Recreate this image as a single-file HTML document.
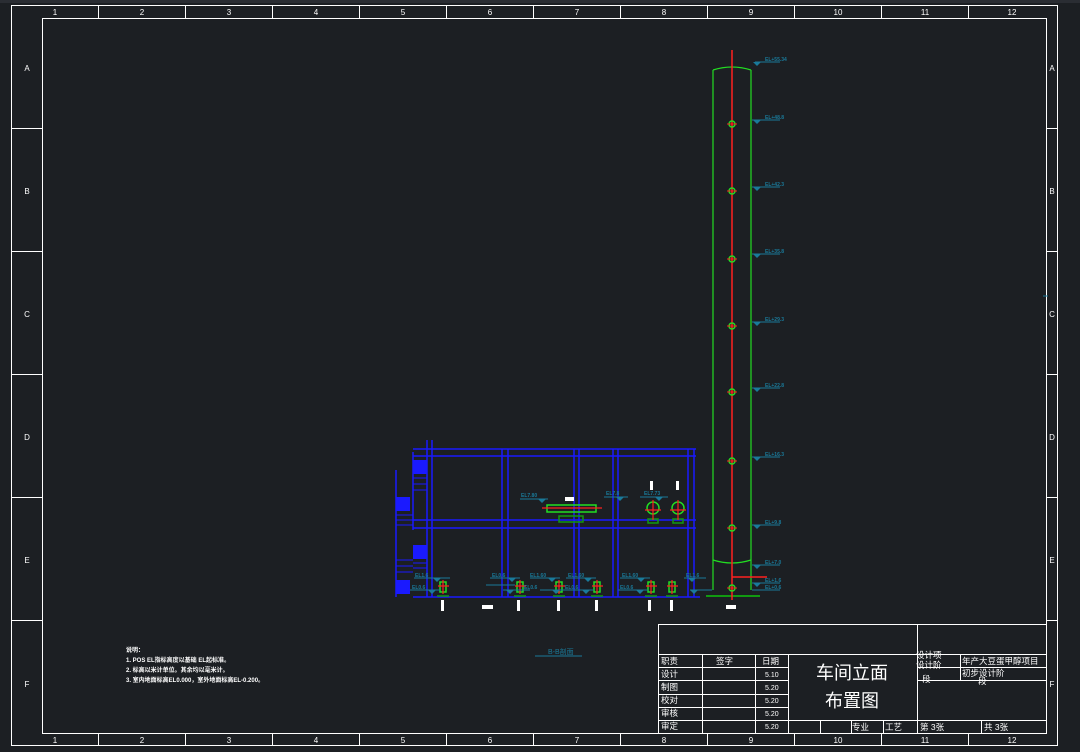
<!DOCTYPE html>
<html><head><meta charset="utf-8"><style>
html,body{margin:0;padding:0;background:#1c1f23;}
svg{display:block;}
text{font-family:"Liberation Sans","Noto Sans CJK SC",sans-serif;}
</style></head><body>
<svg width="1080" height="752" viewBox="0 0 1080 752" xmlns="http://www.w3.org/2000/svg">
<rect width="1080" height="752" fill="#1c1f23"/>
<rect width="1080" height="3" fill="#2a2d33"/>
<g stroke="#fff" stroke-width="1" fill="none">
<rect x="11.5" y="5.5" width="1046" height="740"/>
<rect x="42.5" y="18.5" width="1004" height="715"/>
<path d="M98.5 5V18M185.5 5V18M272.5 5V18M359.5 5V18M446.5 5V18M533.5 5V18M620.5 5V18M707.5 5V18M794.5 5V18M881.5 5V18M968.5 5V18
M98.5 733V745M185.5 733V745M272.5 733V745M359.5 733V745M446.5 733V745M533.5 733V745M620.5 733V745M707.5 733V745M794.5 733V745M881.5 733V745M968.5 733V745
M11 128.5H42M11 251.5H42M11 374.5H42M11 497.5H42M11 620.5H42
M1046 128.5H1057M1046 251.5H1057M1046 374.5H1057M1046 497.5H1057M1046 620.5H1057"/>
</g>
<g fill="#fff" font-size="8" text-anchor="middle">
<text x="55" y="15">1</text><text x="142" y="15">2</text><text x="229" y="15">3</text><text x="316" y="15">4</text><text x="403" y="15">5</text><text x="490" y="15">6</text><text x="577" y="15">7</text><text x="664" y="15">8</text><text x="751" y="15">9</text><text x="838" y="15">10</text><text x="925" y="15">11</text><text x="1012" y="15">12</text>
<text x="55" y="743">1</text><text x="142" y="743">2</text><text x="229" y="743">3</text><text x="316" y="743">4</text><text x="403" y="743">5</text><text x="490" y="743">6</text><text x="577" y="743">7</text><text x="664" y="743">8</text><text x="751" y="743">9</text><text x="838" y="743">10</text><text x="925" y="743">11</text><text x="1012" y="743">12</text>
<text x="27" y="71">A</text><text x="27" y="194">B</text><text x="27" y="317">C</text><text x="27" y="440">D</text><text x="27" y="563">E</text><text x="27" y="687">F</text>
<text x="1052" y="71">A</text><text x="1052" y="194">B</text><text x="1052" y="317">C</text><text x="1052" y="440">D</text><text x="1052" y="563">E</text><text x="1052" y="687">F</text>
</g>

<g stroke="#1a1aff" stroke-width="1.5" fill="none">
<path d="M413 449H696M413 456H696M413 520H696M413 528H696M413 597H700"/>
<path d="M427 440V597M432 440V597M502 449V597M508 449V597M574 449V597M579 449V597M613 449V597M618 449V597M688 449V597M694 449V597"/>
<path d="M413 452V530M396 470V597"/>
</g>
<g fill="#1a1aff">
<rect x="413" y="460" width="14" height="14"/><rect x="396" y="497" width="14" height="14"/><rect x="413" y="545" width="14" height="14"/><rect x="396" y="580" width="14" height="14"/>
</g>
<g stroke="#1a1aff" stroke-width="1">
<path d="M413 478H427M413 484H427M413 490H427M396 515H413M396 520H413M396 525H413M413 563H427M413 568H427M396 560H413M396 566H413M396 572H413"/>
</g>

<g stroke="#22dd22" stroke-width="1.5" fill="none">
<path d="M547 505H596V512H547Z"/><rect x="559" y="516" width="24" height="6" stroke="#119911"/>
<circle cx="653" cy="508" r="6"/><circle cx="678" cy="508" r="6"/>
<rect x="648" y="519" width="10" height="4" stroke="#119911"/><rect x="673" y="519" width="10" height="4" stroke="#119911"/>
<path d="M440 582h6v10h-6zM517 582h6v10h-6zM556 582h6v10h-6zM594 582h6v10h-6zM648 582h6v10h-6zM669 582h6v10h-6z"/>
<path d="M437 596h12M514 596h12M553 596h12M591 596h12M645 596h12M666 596h12" stroke="#119911"/>
<path d="M706 596H760" stroke="#119911" stroke-width="2"/>
</g>
<g stroke="#ff2020" stroke-width="1.2">
<path d="M542 508H602M653 500V520M645 510H661M678 500V520M670 510H686"/>
<path d="M443 580V594M438 586H449M520 580V594M515 586H526M559 580V594M554 586H565M597 580V594M592 586H603M651 580V594M646 586H657M672 580V594M667 586H678"/>
</g>
<g fill="#fff">
<rect x="565" y="497" width="9" height="4"/><rect x="650" y="481" width="3" height="9"/><rect x="676" y="481" width="3" height="9"/>
<rect x="441" y="600" width="3" height="11"/><rect x="482" y="605" width="11" height="4"/><rect x="517" y="600" width="3" height="11"/><rect x="557" y="600" width="3" height="11"/><rect x="595" y="600" width="3" height="11"/><rect x="648" y="600" width="3" height="11"/><rect x="670" y="600" width="3" height="11"/><rect x="726" y="605" width="10" height="4"/>
</g>
<g stroke="#1a7a9a" stroke-width="1">
<path d="M414 578H450M410 590H440M490 578H520M486 585H515M503 590H530M540 590H570M530 578H560M566 578H596M564 590H594M620 578H650M618 590H648M684 578H706M690 590H712M520 499H548M604 497H628M640 497H668"/>
<path d="M755 62H780M752 120H780M752 187H780M752 254H780M752 322H780M752 388H780M752 457H780M752 525H780M752 565H780M752 583H780M752 590H780"/>
</g>
<g fill="#1a7a9a">
<path d="M753 62h8l-4 4z M753 120h8l-4 4z M753 187h8l-4 4z M753 254h8l-4 4z M753 322h8l-4 4z M753 388h8l-4 4z M753 457h8l-4 4z M753 525h8l-4 4z M753 565h8l-4 4z M753 583h8l-4 4z"/>
<path d="M433 578h8l-4 4zM428 590h8l-4 4zM508 578h8l-4 4zM506 590h8l-4 4zM548 578h8l-4 4zM552 590h8l-4 4zM584 578h8l-4 4zM582 590h8l-4 4zM637 578h8l-4 4zM636 590h8l-4 4zM688 578h8l-4 4zM690 590h8l-4 4zM538 499h8l-4 4zM616 497h8l-4 4zM655 497h8l-4 4z"/>
</g>
<g fill="#1a7a9a" font-size="5" font-weight="bold">
<text x="765" y="61">EL+55.34</text><text x="765" y="119">EL+48.8</text><text x="765" y="186">EL+42.3</text><text x="765" y="253">EL+35.8</text><text x="765" y="321">EL+29.3</text><text x="765" y="387">EL+22.8</text><text x="765" y="456">EL+16.3</text><text x="765" y="524">EL+9.8</text><text x="765" y="564">EL+7.0</text><text x="765" y="582">EL+1.6</text><text x="765" y="589">EL+0.6</text>
<text x="415" y="577">EL1.6</text><text x="412" y="589">EL0.6</text><text x="492" y="577">EL0.6</text><text x="530" y="577">EL1.60</text><text x="568" y="577">EL1.60</text><text x="524" y="589">EL0.6</text><text x="565" y="589">EL0.6</text><text x="622" y="577">EL1.60</text><text x="620" y="589">EL0.6</text><text x="686" y="577">EL1.6</text><text x="521" y="497">EL7.80</text><text x="606" y="495">EL7.8</text><text x="644" y="495">EL7.73</text>
</g>
<g fill="none" stroke="#22dd22" stroke-width="1.2">
<path d="M713 70V590M751 70V590M713 70Q732 64 751 70M713 560Q732 566 751 560"/>
</g>
<path d="M732 50V600" stroke="#ff2020" stroke-width="1.5"/>
<path d="M732 577H767" stroke="#ff2020" stroke-width="1.5"/>
<g fill="none" stroke="#22dd22" stroke-width="1.5">
<circle cx="732" cy="124" r="3"/><circle cx="732" cy="191" r="3"/><circle cx="732" cy="259" r="3"/><circle cx="732" cy="326" r="3"/><circle cx="732" cy="392" r="3"/><circle cx="732" cy="461" r="3"/><circle cx="732" cy="528" r="3"/><circle cx="732" cy="588" r="3"/>
</g>
<g stroke="#ff2020" stroke-width="1"><path d="M727 124h10M727 191h10M727 259h10M727 326h10M727 392h10M727 461h10M727 528h10M727 588h10"/></g>
<text x="548" y="654" fill="#1a7a9a" font-size="7">B-B剖面</text>
<path d="M535 656H582" stroke="#1a7a9a"/>
<g fill="#fff" font-size="6" font-weight="bold">
<text x="126" y="652">说明：</text>
<text x="126" y="662">1. POS EL指标高度以基础 EL起标准。</text>
<text x="126" y="672">2. 标高以米计单位。其余均以毫米计。</text>
<text x="126" y="682">3. 室内地面标高EL0.000，室外地面标高EL-0.200。</text>
</g>
<g stroke="#fff" stroke-width="1" fill="none">
<rect x="658.5" y="624.5" width="388" height="109"/>
<path d="M658 654.5H917M658 667.5H788M658 680.5H788M658 694.5H788M658 707.5H788M658 720.5H1046M917 654.5H1046M917 667.5H1046M917 680.5H1046"/>
<path d="M702.5 654V733M755.5 654V733M788.5 654V733M917.5 624V733M960.5 654V680M820.5 720V733M851.5 720V733M883.5 720V733M981.5 720V733"/>
</g>
<g fill="#fff" font-size="8.5">
<text x="661" y="664">职责</text><text x="716" y="664">签字</text><text x="762" y="664">日期</text>
<text x="661" y="677">设计</text><text x="661" y="690">制图</text><text x="661" y="703">校对</text><text x="661" y="716">审核</text><text x="661" y="729">审定</text>
<g font-size="7"><text x="765" y="677">5.10</text><text x="765" y="690">5.20</text><text x="765" y="703">5.20</text><text x="765" y="716">5.20</text><text x="765" y="729">5.20</text></g>
<text x="852" y="730">专业</text><text x="885" y="730">工艺</text><text x="920" y="730">第 3张</text><text x="984" y="730">共 3张</text>
<text x="916" y="658">设计项</text><text x="916" y="668">设计阶</text><text x="922" y="682">段</text>
<text x="962" y="664">年产大豆蛋甲醇项目</text><text x="962" y="676">初步设计阶</text><text x="978" y="684">段</text>
</g>
<text x="852" y="679" fill="#fff" font-size="18" text-anchor="middle">车间立面</text>
<text x="852" y="707" fill="#fff" font-size="18" text-anchor="middle">布置图</text>
<path d="M1043 296H1048" stroke="#1a7a9a"/>
</svg>
</body></html>
